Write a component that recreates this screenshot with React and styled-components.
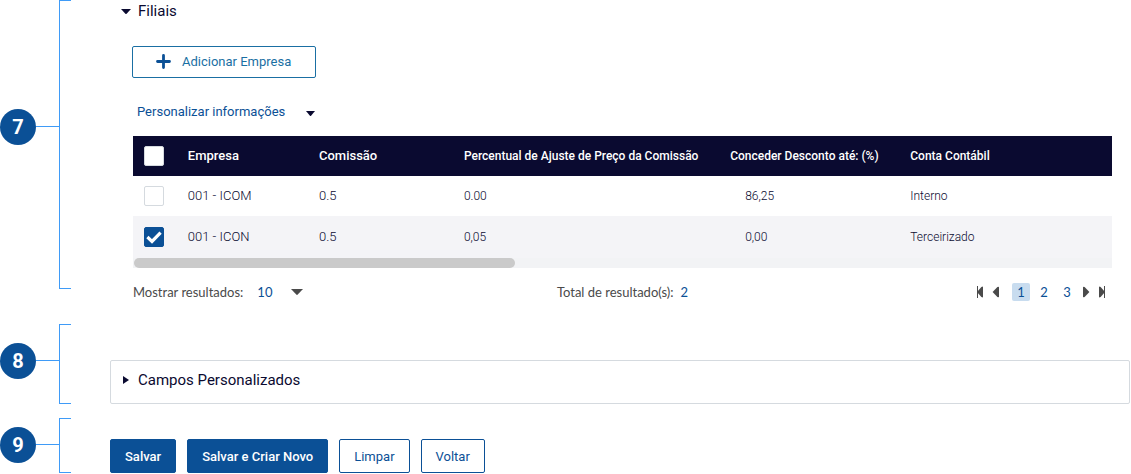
import React, { useState } from "react";
import styled, { createGlobalStyle, css } from "styled-components";

const color = {
  blue: "#0b5096",
  teal: "#1a6fa3",
  navy: "#0a0a30",
  line: "#3f9bf7",
  grey: "#4a4a4a",
  border: "#d5dadf",
};

const GlobalStyle = createGlobalStyle`
  *, *::before, *::after { box-sizing: border-box; }
  body {
    margin: 0;
    background: #fff;
    color: ${color.navy};
    font-family: Roboto, "Liberation Sans", sans-serif;
    font-size: 13px;
  }
  button, select, input { font: inherit; color: inherit; margin: 0; }
`;

const Page = styled.main`
  display: flex;
  flex-direction: column;
`;

const Section = styled.section`
  display: grid;
  grid-template-columns: 71px minmax(0, 1fr);
  column-gap: 39px;
  margin-bottom: ${(p) => p.$gap || 0}px;
`;

const Marker = styled.div`
  display: grid;
  grid-template-columns: 36px 23px 12px;
  margin-bottom: ${(p) => p.$short || 0}px;
`;

const Badge = styled.span`
  display: flex;
  align-items: center;
  justify-content: center;
  width: 36px;
  height: 36px;
  margin-top: ${(p) => p.$top}px;
  border-radius: 50%;
  background: ${color.blue};
  color: #fff;
  font-family: Roboto, sans-serif;
  font-size: 20px;
  font-weight: 700;
`;

const Connector = styled.span`
  height: 1px;
  margin-top: ${(p) => p.$top + 17}px;
  background: ${color.line};
`;

const Bracket = styled.span`
  border: 1px solid ${color.line};
  border-right: 0;
`;

const Content = styled.div`
  padding-top: ${(p) => p.$top || 0}px;
`;

const Disclosure = styled.button`
  display: flex;
  align-items: center;
  gap: 7px;
  padding: 0;
  border: 0;
  background: none;
  font-size: 15px;
  line-height: 22px;
  text-align: left;
  cursor: pointer;
`;

const FiliaisHead = styled.div`
  padding-left: 11px;
  margin-bottom: 24px;
`;

const FiliaisBody = styled.div`
  padding: 0 19px 0 23px;
`;

const AddButton = styled.button`
  display: flex;
  align-items: center;
  gap: 11px;
  height: 32px;
  margin-left: -1px;
  padding: 0 24px 1px 23px;
  border: 1px solid ${color.teal};
  border-radius: 2px;
  background: #fff;
  color: ${color.teal};
  cursor: pointer;
`;

const CustomizeButton = styled.button`
  display: flex;
  align-items: center;
  gap: 21px;
  margin: 24px 0 14px;
  padding: 0 4px;
  border: 0;
  background: none;
  color: ${color.blue};
  line-height: 20px;
  cursor: pointer;
`;

const CaretSlot = styled.span`
  display: flex;
  padding-top: 2px;
  color: ${color.navy};
`;

const Table = styled.table`
  width: 100%;
  table-layout: fixed;
  border-collapse: collapse;
`;

const Col = styled.col`
  width: ${(p) => (p.$width ? `${p.$width}%` : "auto")};
`;

const HeadRow = styled.tr`
  height: 40px;
  background: ${color.navy};
  color: #fff;
`;

const Row = styled.tr`
  height: ${(p) => (p.$shaded ? 42 : 40)}px;
  background: ${(p) => (p.$shaded ? "#f4f4f7" : "#fff")};
`;

const cell = css`
  padding: 0;
  font-size: ${(p) => (p.$small ? 12 : 13)}px;
  line-height: 18px;
  text-align: left;
  vertical-align: middle;
  white-space: nowrap;
`;

const Th = styled.th`
  ${cell}
  font-weight: 500;
`;

const Td = styled.td`
  ${cell}
  padding-left: ${(p) => (p.$indent ? 15 : 0)}px;
  font-weight: 300;
`;

const Tick = styled.input`
  appearance: none;
  display: block;
  width: 20px;
  height: 20px;
  margin-left: 11px;
  border: 1px solid ${color.border};
  border-radius: 2px;
  background: #fff;
  cursor: pointer;
`;

const TickBox = styled.span`
  display: grid;
  width: 31px;

  > * { grid-area: 1 / 1; }
  ${Tick}:checked {
    border-color: ${color.blue};
    background: ${color.blue};
  }
  svg {
    margin: 2px 0 0 13px;
    pointer-events: none;
    visibility: hidden;
  }
  ${Tick}:checked + svg { visibility: visible; }
`;

const ScrollTrack = styled.div`
  height: 10px;
  padding-left: 1px;
  background: #f2f3f5;
`;

const ScrollThumb = styled.div`
  width: 39%;
  height: 10px;
  border-radius: 5px;
  background: #cacaca;
`;

const TableFooter = styled.div`
  display: grid;
  grid-template-columns: 1fr auto 1fr;
  align-items: center;
  margin-top: 15px;
  color: ${color.grey};
  font-family: Lato, sans-serif;
  font-size: 13px;
  line-height: 18px;
`;

const PageSize = styled.label`
  display: flex;
  align-items: center;
`;

const SelectBox = styled.span`
  display: flex;
  align-items: center;
  margin-left: 14px;

  svg { margin-left: -12px; pointer-events: none; }
`;

const Select = styled.select`
  appearance: none;
  width: 46px;
  height: 18px;
  padding: 0;
  border: 0;
  background: none;
  color: ${color.blue};
  line-height: 18px;
`;

const Total = styled.output`
  margin-left: 7px;
  color: ${color.blue};
`;

const Pager = styled.nav`
  display: flex;
  align-items: center;
  justify-content: flex-end;
  padding-right: 6px;
`;

const PagerButton = styled.button`
  display: flex;
  justify-content: center;
  width: ${(p) => (p.$wide ? 18 : 8)}px;
  margin-left: ${(p) => p.$gap || 0}px;
  padding: 0;
  border: 0;
  border-radius: 2px;
  background: ${(p) => (p.$current ? "#c8dcef" : "none")};
  color: ${(p) => (p.$wide ? color.blue : color.grey)};
  line-height: 18px;
  cursor: pointer;
`;

const Panel = styled.div`
  margin-right: 1px;
  padding: 8px 11px 12px;
  border: 1px solid ${color.border};
  border-radius: 2px;
`;

const Actions = styled.div`
  display: flex;
  gap: 11px;
`;

const ActionButton = styled.button`
  height: 34px;
  padding: 0 14px;
  border: 1px solid ${color.blue};
  border-radius: 2px;
  background: ${(p) => (p.$primary ? color.blue : "#fff")};
  color: ${(p) => (p.$primary ? "#fff" : color.blue)};
  font-weight: ${(p) => (p.$primary ? 500 : 400)};
  cursor: pointer;
`;

const CaretDown = ({ width = 9, height = 5 }) => (
  <svg width={width} height={height} viewBox="0 0 10 6" preserveAspectRatio="none" aria-hidden="true">
    <path d="M0 0H10L5.6 5.6Q5 6.2 4.4 5.6Z" fill="currentColor" />
  </svg>
);

const CaretRight = () => (
  <svg width="9" height="8" viewBox="0 0 9 8" aria-hidden="true">
    <path d="M1 0L7 4L1 8Z" fill="currentColor" />
  </svg>
);

const PlusIcon = () => (
  <svg width="15" height="15" viewBox="0 0 15 15" aria-hidden="true">
    <path d="M7.5 1.5V13.5M1.5 7.5H13.5" stroke={color.blue} strokeWidth="2.8" strokeLinecap="round" />
  </svg>
);

const CheckIcon = () => (
  <svg width="16" height="16" viewBox="0 0 16 16" fill="none" aria-hidden="true">
    <path d="M1.4 8L6 12.4L14.6 3.6" stroke="#fff" strokeWidth="3.2" />
  </svg>
);

const ArrowIcon = ({ end, flip }) => (
  <svg width="8" height="12" viewBox="0 0 8 12" aria-hidden="true">
    <g transform={flip ? "translate(8 0) scale(-1 1)" : undefined} fill="currentColor">
      <path d={end ? "M1 6L5.4 .9Q7 .2 7 1V11Q7 11.8 5.4 11.1Z" : "M.6 6L5.4 1Q7 .4 7 1.2V10.8Q7 11.6 5.4 11Z"} />
      {end && <path d="M1 0H2V12H1Z" />}
    </g>
  </svg>
);

const NumberedSection = ({ number, badgeTop, short, gap, top, children }) => (
  <Section $gap={gap}>
    <Marker $short={short}>
      <Badge $top={badgeTop}>{number}</Badge>
      <Connector $top={badgeTop} />
      <Bracket />
    </Marker>
    <Content $top={top}>{children}</Content>
  </Section>
);

const TickCell = ({ label, ...rest }) => (
  <TickBox>
    <Tick type="checkbox" aria-label={label} {...rest} />
    <CheckIcon />
  </TickBox>
);

const companies = [
  ["001 - ICOM", "0.5", "0.00", "86,25", "Interno"],
  ["001 - ICON", "0.5", "0,05", "0,00", "Terceirizado"],
];

export default function App() {
  const [selected, setSelected] = useState([false, true]);
  const [page, setPage] = useState(1);
  const toggle = (i) => setSelected((s) => s.map((v, j) => (j === i ? !v : v)));
  const all = selected.every(Boolean);

  return (
    <Page>
      <GlobalStyle />
      <NumberedSection number={7} badgeTop={109} short={12} gap={23}>
        <FiliaisHead>
          <Disclosure type="button" aria-expanded="true">
            <CaretDown width={10} />
            Filiais
          </Disclosure>
        </FiliaisHead>
        <FiliaisBody>
          <AddButton type="button">
            <PlusIcon />
            Adicionar Empresa
          </AddButton>
          <CustomizeButton type="button" aria-haspopup="true">
            Personalizar informações
            <CaretSlot><CaretDown /></CaretSlot>
          </CustomizeButton>
          <Table>
            <colgroup>
              <Col $width={5.6} />
              <Col $width={13.4} />
              <Col $width={14.8} />
              <Col $width={27.2} />
              <Col $width={18.4} />
              <Col />
            </colgroup>
            <thead>
              <HeadRow>
                <Th>
                  <TickCell label="Selecionar tudo" checked={all} onChange={() => setSelected([!all, !all])} />
                </Th>
                <Th>Empresa</Th>
                <Th>Comissão</Th>
                <Th $small>Percentual de Ajuste de Preço da Comissão</Th>
                <Th $small>Conceder Desconto até: (%)</Th>
                <Th $small>Conta Contábil</Th>
              </HeadRow>
            </thead>
            <tbody>
              {companies.map(([name, fee, adjust, discount, account], i) => (
                <Row key={name} $shaded={i % 2 === 1}>
                  <Td>
                    <TickCell label={name} checked={selected[i]} onChange={() => toggle(i)} />
                  </Td>
                  <Td>{name}</Td>
                  <Td>{fee}</Td>
                  <Td $small>{adjust}</Td>
                  <Td $small $indent>{discount}</Td>
                  <Td $small>{account}</Td>
                </Row>
              ))}
            </tbody>
          </Table>
          <ScrollTrack>
            <ScrollThumb />
          </ScrollTrack>
          <TableFooter>
            <PageSize>
              Mostrar resultados:
              <SelectBox>
                <Select defaultValue="10">
                  <option>10</option>
                  <option>20</option>
                  <option>50</option>
                </Select>
                <CaretDown width={12} height={6} />
              </SelectBox>
            </PageSize>
            <span>
              Total de resultado(s):
              <Total>2</Total>
            </span>
            <Pager aria-label="Paginação">
              <PagerButton type="button" aria-label="Primeira" onClick={() => setPage(1)}><ArrowIcon end /></PagerButton>
              <PagerButton type="button" aria-label="Anterior" $gap={8}><ArrowIcon /></PagerButton>
              <PagerButton type="button" $wide $gap={12} $current={page === 1} onClick={() => setPage(1)}>1</PagerButton>
              <PagerButton type="button" $wide $gap={5} $current={page === 2} onClick={() => setPage(2)}>2</PagerButton>
              <PagerButton type="button" $wide $gap={5} $current={page === 3} onClick={() => setPage(3)}>3</PagerButton>
              <PagerButton type="button" aria-label="Próxima" $gap={6}><ArrowIcon flip /></PagerButton>
              <PagerButton type="button" aria-label="Última" $gap={8} onClick={() => setPage(3)}><ArrowIcon end flip /></PagerButton>
            </Pager>
          </TableFooter>
        </FiliaisBody>
      </NumberedSection>

      <NumberedSection number={8} badgeTop={19} gap={14} top={36}>
        <Panel>
          <Disclosure type="button" aria-expanded="false">
            <CaretRight />
            Campos Personalizados
          </Disclosure>
        </Panel>
      </NumberedSection>

      <NumberedSection number={9} badgeTop={9} top={21}>
        <Actions>
          <ActionButton type="button" $primary>Salvar</ActionButton>
          <ActionButton type="button" $primary>Salvar e Criar Novo</ActionButton>
          <ActionButton type="button">Limpar</ActionButton>
          <ActionButton type="button">Voltar</ActionButton>
        </Actions>
      </NumberedSection>
    </Page>
  );
}
